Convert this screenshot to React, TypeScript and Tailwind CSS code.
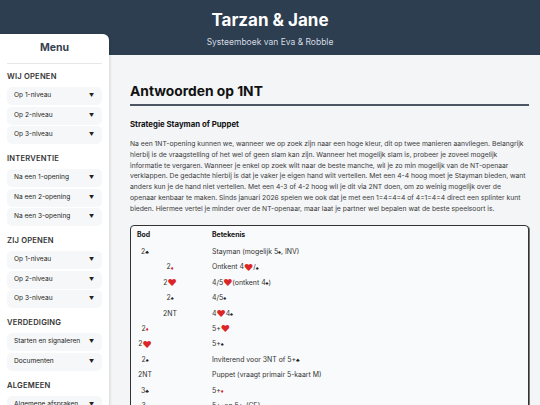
import React from "react";

const sections: { title: string; items: string[] }[] = [
  { title: "WIJ OPENEN", items: ["Op 1-niveau", "Op 2-niveau", "Op 3-niveau"] },
  { title: "INTERVENTIE", items: ["Na een 1-opening", "Na een 2-opening", "Na een 3-opening"] },
  { title: "ZIJ OPENEN", items: ["Op 1-niveau", "Op 2-niveau", "Op 3-niveau"] },
  { title: "VERDEDIGING", items: ["Starten en signaleren", "Documenten"] },
  { title: "ALGEMEEN", items: ["Algemene afspraken"] },
];

const C = () => <span className="text-[5.5px] text-[#222]">♣</span>;
const S = () => <span className="text-[5.5px] text-[#222]">♠</span>;
const D = () => <span className="text-[5.5px] text-[#dc2626]">♦</span>;
const H = () => <span className="text-[9px] leading-[8px] text-[#dc2626]">♥</span>;

type Row = { bid: React.ReactNode; nested?: boolean; meaning: React.ReactNode };

const rows: Row[] = [
  { bid: <>2<C /></>, meaning: <>Stayman (mogelijk 5<S />, INV)</> },
  { bid: <>2<D /></>, nested: true, meaning: <>Ontkent 4<H />/<S /></> },
  { bid: <>2<H /></>, nested: true, meaning: <>4/5<H /> (ontkent 4<S />)</> },
  { bid: <>2<S /></>, nested: true, meaning: <>4/5<S /></> },
  { bid: <>2NT</>, nested: true, meaning: <>4<H />4<S /></> },
  { bid: <>2<D /></>, meaning: <>5+<H /></> },
  { bid: <>2<H /></>, meaning: <>5+<S /></> },
  { bid: <>2<S /></>, meaning: <>Inviterend voor 3NT of 5+<C /></> },
  { bid: <>2NT</>, meaning: <>Puppet (vraagt primair 5-kaart M)</> },
  { bid: <>3<C /></>, meaning: <>5+<D /></> },
  { bid: <>3<D /></>, meaning: <>5+<C /> en 5+<D /> (GF)</> },
];

export default function App() {
  return (
    <div className="w-[540px] h-[405px] overflow-hidden bg-[#f4f5f7] font-['Inter',sans-serif]">
      <header className="h-[55px] bg-[#2c3e50] flex flex-col items-center pt-[10px]">
        <h1 className="text-[17px] leading-[21px] font-bold text-white">Tarzan &amp; Jane</h1>
        <p className="mt-[5px] text-[8.5px] leading-[12px] text-[#d5dbe2]">Systeemboek van Eva &amp; Robble</p>
      </header>
      <div className="flex">
        <aside className="relative z-10 -mt-[21px] w-[109px] h-[400px] shrink-0 bg-white rounded-tr-[6px] shadow-[1px_0_3px_rgba(0,0,0,0.12)] px-[7px] pt-[7px]">
          <div className="text-center text-[10.5px] leading-[14px] font-bold text-[#374151]">Menu</div>
          <div className="mt-[8px] h-px bg-[#e5e7eb]" />
          <div className="mt-[7px] flex flex-col gap-[9px]">
            {sections.map((s) => (
              <div key={s.title}>
                <div className="text-[7.6px] leading-[11px] font-semibold text-[#333] tracking-[0.2px]">{s.title}</div>
                <div className="mt-[5px] flex flex-col gap-[1.5px]">
                  {s.items.map((it) => (
                    <div key={it} className="h-[18px] rounded-[5px] bg-[#f6f7f8] flex items-center justify-between pl-[7px] pr-[8px] text-[6.6px] text-[#222] whitespace-nowrap">
                      <span>{it}</span>
                      <span className="text-[5px]">▼</span>
                    </div>
                  ))}
                </div>
              </div>
            ))}
          </div>
        </aside>
        <main className="flex-1 pl-[21px] pr-[11px] pt-[27px]">
          <h2 className="text-[13.8px] leading-[18px] font-bold text-[#111]">Antwoorden op 1NT</h2>
          <div className="mt-[4px] h-[2px] bg-[#4b5563]" />
          <h3 className="mt-[13px] text-[7.8px] leading-[11px] font-bold text-[#111]">Strategie Stayman of Puppet</h3>
          <p className="mt-[9px] text-[6.77px] leading-[10.8px] text-[#3a3a3a]">
            Na een 1NT-opening kunnen we, wanneer we op zoek zijn naar een hoge kleur, dit op twee manieren aanvliegen. Belangrijk hierbij is de vraagstelling of het wel of geen slam kan zijn. Wanneer het mogelijk slam is, probeer je zoveel mogelijk informatie te vergaren. Wanneer je enkel op zoek wilt naar de beste manche, wil je zo min mogelijk van de NT-openaar verklappen. De gedachte hierbij is dat je vaker je eigen hand wilt vertellen. Met een 4-4 hoog moet je Stayman bieden, want anders kun je de hand niet vertellen. Met een 4-3 of 4-2 hoog wil je dit via 2NT doen, om zo weinig mogelijk over de openaar kenbaar te maken. Sinds januari 2026 spelen we ook dat je met een 1=4=4=4 of 4=1=4=4 direct een splinter kunt bieden. Hiermee vertel je minder over de NT-openaar, maar laat je partner wel bepalen wat de beste speelsoort is.
          </p>
          <div className="mt-[10px] border border-[#333] rounded-[4px] bg-[#f9fafb] shadow-[1px_1px_0_#777] pt-[3px] text-[6.9px] text-[#333]">
            <div className="flex h-[14px] items-center font-bold text-[#111]">
              <div className="w-[81px] pl-[6px]">Bod</div>
              <div>Betekenis</div>
            </div>
            {rows.map((r, i) => (
              <div key={i} className={`flex h-[15.4px] items-center ${i === 0 ? "mt-[2px]" : ""}`}>
                <div className="w-[81px] flex">
                  <span className={`inline-flex items-center justify-center w-[28px] ${r.nested ? "ml-[25px]" : ""}`}>{r.bid}</span>
                </div>
                <div className="flex items-center">{r.meaning}</div>
              </div>
            ))}
          </div>
        </main>
      </div>
    </div>
  );
}
